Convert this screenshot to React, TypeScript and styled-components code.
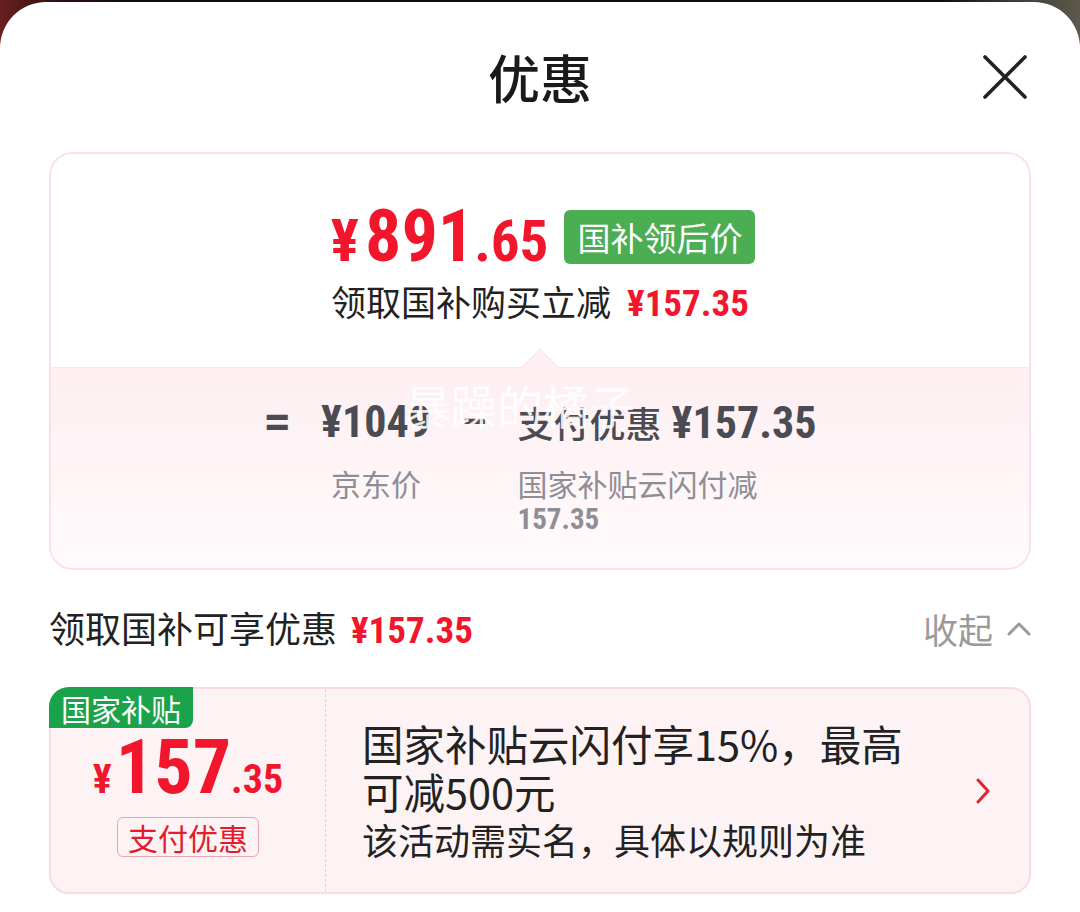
import React from "react";
import styled, { createGlobalStyle } from "styled-components";

const CJK = `"Noto Sans CJK SC", "Noto Sans", sans-serif`;
const NUM = `"Roboto Condensed", "Liberation Sans Narrow", "Arial Narrow", "DejaVu Sans Condensed", Roboto, "Noto Sans CJK SC", sans-serif`;

const GlobalStyle = createGlobalStyle`
  * { box-sizing: border-box; }
  html, body { margin: 0; padding: 0; }
  body {
    width: 1080px;
    height: 912px;
    overflow: hidden;
    background: linear-gradient(90deg, #6a1e1e 0px, #2a1010 60px, #0d0d0d 140px, #0d0d0d 940px, #3c3a33 1010px, #5c584c 1080px);
    font-family: ${CJK};
  }
`;

const Sheet = styled.div`
  margin-top: 2px;
  height: 910px;
  background: #fff;
  border-radius: 46px 46px 0 0;
  padding: 0 49px;
  overflow: hidden;
`;

const Header = styled.header`
  height: 150px;
  display: grid;
  grid-template-columns: 1fr auto 1fr;
  align-items: center;
`;

const Title = styled.h1`
  grid-column: 2;
  margin: 0;
  font-size: 52px;
  font-weight: 500;
  line-height: 1;
  color: #1a1a1a;
`;

const CloseButton = styled.button`
  grid-column: 3;
  justify-self: end;
  width: 52px;
  height: 52px;
  padding: 0;
  border: none;
  background: none;
  display: flex;
  align-items: center;
  justify-content: center;
`;

const SummaryCard = styled.section`
  border: 2px solid #fbe1e6;
  border-radius: 24px;
  overflow: hidden;
`;

const SummaryTop = styled.div`
  height: 213px;
  padding-top: 55px;
  display: flex;
  flex-direction: column;
  align-items: center;
  background: #fff;
`;

const PriceRow = styled.div`
  height: 56px;
  display: flex;
  align-items: center;
  gap: 16px;
  margin-left: 6px;
`;

const Amount = styled.div<{ $color: string }>`
  display: flex;
  align-items: baseline;
  font-family: ${NUM};
  font-weight: 700;
  line-height: 1;
  color: ${(p) => p.$color};
`;

const Part = styled.span<{ $size: number; $gap?: number }>`
  font-size: ${(p) => p.$size}px;
  margin-right: ${(p) => p.$gap ?? 0}px;
`;

const GreenTag = styled.span`
  height: 54px;
  padding: 0 13px;
  display: flex;
  align-items: center;
  border-radius: 6px;
  background: #4cae52;
  color: #fff;
  font-size: 33px;
  line-height: 1;
`;

const SaveLine = styled.div`
  margin-top: 14px;
  display: flex;
  align-items: baseline;
  gap: 16px;
  font-size: 35px;
  line-height: 44px;
  color: #222;
`;

const RedNum = styled.span<{ $size: number }>`
  font-family: ${NUM};
  font-weight: 700;
  font-size: ${(p) => p.$size}px;
  color: #f2162c;
`;

const Breakdown = styled.div`
  position: relative;
  height: 201px;
  padding-top: 32px;
  display: flex;
  justify-content: center;
  border-top: 1px solid #fae3e8;
  background: linear-gradient(180deg, #fdeff2 0%, #fffafb 100%);

  &::before {
    content: "";
    position: absolute;
    top: -14px;
    left: 50%;
    width: 26px;
    height: 26px;
    background: #fdeff2;
    border-top: 1px solid #fae3e8;
    border-left: 1px solid #fae3e8;
    transform: translateX(-50%) rotate(45deg);
  }
`;

const Formula = styled.div`
  display: grid;
  grid-template-columns: auto auto auto auto;
  grid-template-rows: 44px auto;
  column-gap: 30px;
  row-gap: 21px;
`;

const Operator = styled.span`
  font-family: Roboto, "Noto Sans", sans-serif;
  font-weight: 700;
  font-size: 48px;
  line-height: 44px;
  color: #4b4b53;
`;

const Term = styled.div<{ $center?: boolean }>`
  display: flex;
  align-items: baseline;
  gap: 10px;
  justify-self: ${(p) => (p.$center ? "center" : "start")};
  line-height: 44px;
  color: #4b4b53;
`;

const TermWord = styled.span`
  font-size: 36px;
  font-weight: 500;
`;

const TermNum = styled.span`
  font-family: ${NUM};
  font-weight: 700;
  font-size: 44px;
`;

const TermLabel = styled.div<{ $center?: boolean }>`
  width: ${(p) => (p.$center ? "auto" : "250px")};
  justify-self: ${(p) => (p.$center ? "center" : "start")};
  font-size: 30px;
  line-height: 36px;
  color: #8e8e96;
`;

const LabelNum = styled.div`
  font-family: ${NUM};
  font-weight: 700;
  font-size: 29px;
  line-height: 36px;
`;

const Watermark = styled.span`
  position: absolute;
  left: 354px;
  top: 13px;
  font-size: 46px;
  line-height: 1;
  color: rgba(255, 255, 255, 0.88);
  pointer-events: none;
`;

const SectionHead = styled.div`
  height: 117px;
  display: flex;
  align-items: center;
  justify-content: space-between;
`;

const SectionTitle = styled.div`
  display: flex;
  align-items: baseline;
  gap: 14px;
  font-size: 36px;
  line-height: 44px;
  color: #222;
`;

const Collapse = styled.div`
  display: flex;
  align-items: center;
  gap: 14px;
  font-size: 35px;
  line-height: 44px;
  color: #9a9a9a;
`;

const Coupon = styled.div`
  position: relative;
  height: 207px;
  display: flex;
  border: 2px solid #f9dbe1;
  border-radius: 20px;
  background: #fdf3f5;
`;

const Badge = styled.span`
  position: absolute;
  top: -2px;
  left: -2px;
  height: 41px;
  padding: 0 12px;
  display: flex;
  align-items: center;
  border-radius: 20px 0 8px 0;
  background: #1ba34b;
  color: #fff;
  font-size: 30px;
  line-height: 1;
`;

const CouponLeft = styled.div`
  width: 275px;
  flex-shrink: 0;
  padding-top: 40px;
  display: flex;
  flex-direction: column;
  align-items: center;
  gap: 12px;
  border-right: 1.5px dashed #e0d2d5;
`;

const OutlineTag = styled.span`
  height: 40px;
  padding: 0 10px;
  display: flex;
  align-items: center;
  border: 1px solid #eaa6ae;
  border-radius: 6px;
  color: #e21c2c;
  font-size: 30px;
  line-height: 1;
`;

const CouponRight = styled.div`
  flex: 1;
  padding: 0 39px 0 36px;
  display: flex;
  align-items: center;
  justify-content: space-between;
`;

const CouponText = styled.div`
  width: 566px;
  color: #222;
`;

const CouponTitle = styled.div`
  font-size: 41.5px;
  line-height: 48px;
`;

const CouponNote = styled.div`
  font-size: 36px;
  line-height: 48px;
`;

export default function App() {
  return (
    <>
      <GlobalStyle />
      <Sheet>
        <Header>
          <Title>优惠</Title>
          <CloseButton aria-label="关闭">
            <svg width="48" height="48" viewBox="0 0 48 48">
              <path d="M4 4 L44 44 M44 4 L4 44" stroke="#222" strokeWidth="3.6" strokeLinecap="round" fill="none" />
            </svg>
          </CloseButton>
        </Header>

        <SummaryCard>
          <SummaryTop>
            <PriceRow>
              <Amount $color="#f2162c">
                <Part $size={60} $gap={6}>¥</Part>
                <Part $size={72}>891</Part>
                <Part $size={57}>.65</Part>
              </Amount>
              <GreenTag>国补领后价</GreenTag>
            </PriceRow>
            <SaveLine>
              <span>领取国补购买立减</span>
              <RedNum $size={37}>¥157.35</RedNum>
            </SaveLine>
          </SummaryTop>
          <Breakdown>
            <Formula>
              <Operator>=</Operator>
              <Term $center>
                <TermNum>¥1049</TermNum>
              </Term>
              <Operator>−</Operator>
              <Term>
                <TermWord>支付优惠</TermWord>
                <TermNum>¥157.35</TermNum>
              </Term>
              <span />
              <TermLabel $center>京东价</TermLabel>
              <span />
              <TermLabel>
                国家补贴云闪付减
                <LabelNum>157.35</LabelNum>
              </TermLabel>
            </Formula>
            <Watermark>暴躁的橘子</Watermark>
          </Breakdown>
        </SummaryCard>

        <SectionHead>
          <SectionTitle>
            <span>领取国补可享优惠</span>
            <RedNum $size={37}>¥157.35</RedNum>
          </SectionTitle>
          <Collapse>
            <span>收起</span>
            <svg width="24" height="14" viewBox="0 0 24 14">
              <path d="M2 12 L12 2 L22 12" stroke="#9a9a9a" strokeWidth="3" fill="none" strokeLinecap="round" strokeLinejoin="round" />
            </svg>
          </Collapse>
        </SectionHead>

        <Coupon>
          <Badge>国家补贴</Badge>
          <CouponLeft>
            <Amount $color="#f2162c">
              <Part $size={40} $gap={4}>¥</Part>
              <Part $size={76}>157</Part>
              <Part $size={40}>.35</Part>
            </Amount>
            <OutlineTag>支付优惠</OutlineTag>
          </CouponLeft>
          <CouponRight>
            <CouponText>
              <CouponTitle>国家补贴云闪付享15%，最高可减500元</CouponTitle>
              <CouponNote>该活动需实名，具体以规则为准</CouponNote>
            </CouponText>
            <svg width="14" height="26" viewBox="0 0 14 26">
              <path d="M2 2 L12 13 L2 24" stroke="#e0262f" strokeWidth="3" fill="none" strokeLinecap="round" strokeLinejoin="round" />
            </svg>
          </CouponRight>
        </Coupon>
      </Sheet>
    </>
  );
}
